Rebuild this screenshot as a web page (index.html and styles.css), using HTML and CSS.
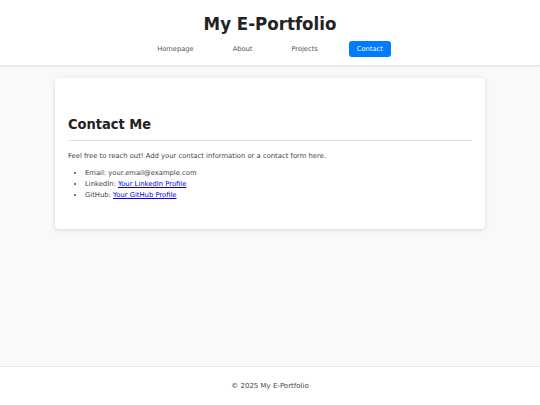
FILE: index.html
```html
<!DOCTYPE html>
<html>
<head>
<meta charset="utf-8">
<link rel="stylesheet" href="styles.css">
</head>
<body>
<header class="site-header">
  <h1 class="site-title">My E-Portfolio</h1>
  <nav class="nav">
    <a class="nav-link" href="#">Homepage</a>
    <a class="nav-link" href="#">About</a>
    <a class="nav-link" href="#">Projects</a>
    <a class="nav-link active" href="#">Contact</a>
  </nav>
</header>
<main class="main">
  <section class="card">
    <h2 class="card-title">Contact Me</h2>
    <p class="intro">Feel free to reach out! Add your contact information or a contact form here.</p>
    <ul class="contact-list">
      <li>Email: your.email@example.com</li>
      <li>LinkedIn: <a href="#">Your LinkedIn Profile</a></li>
      <li>GitHub: <a href="#">Your GitHub Profile</a></li>
    </ul>
  </section>
</main>
<footer class="site-footer">© 2025 My E-Portfolio</footer>
</body>
</html>
```
FILE: styles.css
```css
* { box-sizing: border-box; }
html, body { margin: 0; padding: 0; }
body {
  font-family: "DejaVu Sans", Verdana, sans-serif;
  background: #f8f9fa;
  color: #333;
  height: 405px;
  display: flex;
  flex-direction: column;
}
.site-header {
  background: #fff;
  border-bottom: 1px solid #e3e5e8;
  box-shadow: 0 1px 3px rgba(0,0,0,0.05);
  height: 66px;
  padding-top: 13px;
  text-align: center;
}
.site-title {
  margin: 0;
  font-family: "DejaVu Sans Condensed", "DejaVu Sans", sans-serif;
  font-size: 18.5px;
  line-height: 22px;
  font-weight: bold;
  color: #222;
}
.nav {
  display: flex;
  justify-content: center;
  gap: 23px;
  margin-top: 6px;
}
.nav-link {
  font-size: 6.7px;
  line-height: 16px;
  height: 16px;
  padding: 0 8px;
  color: #555;
  text-decoration: none;
  border-radius: 3px;
}
.nav-link.active {
  background: #007bff;
  color: #fff;
}
.main {
  flex: 1;
  padding: 12px 55px;
}
.card {
  background: #fff;
  border-radius: 4px;
  box-shadow: 0 1px 4px rgba(0,0,0,0.15);
  padding: 36px 13px 30px;
  height: 151px;
}
.card-title {
  margin: 0;
  font-family: "DejaVu Sans Condensed", "DejaVu Sans", sans-serif;
  font-size: 14.5px;
  line-height: 20px;
  font-weight: bold;
  color: #222;
  padding-bottom: 6px;
  border-bottom: 1px solid #e0e0e0;
}
.intro {
  margin: 11px 0 0;
  font-size: 6.8px;
  line-height: 9px;
  color: #444;
}
.contact-list {
  margin: 7px 0 0;
  padding-left: 17px;
  font-size: 6.8px;
  line-height: 11px;
  color: #444;
}
.contact-list a { color: #0000ee; }
.site-footer {
  background: #fff;
  border-top: 1px solid #e3e5e8;
  height: 39px;
  text-align: center;
  font-size: 7px;
  line-height: 38px;
  color: #444;
}
```
